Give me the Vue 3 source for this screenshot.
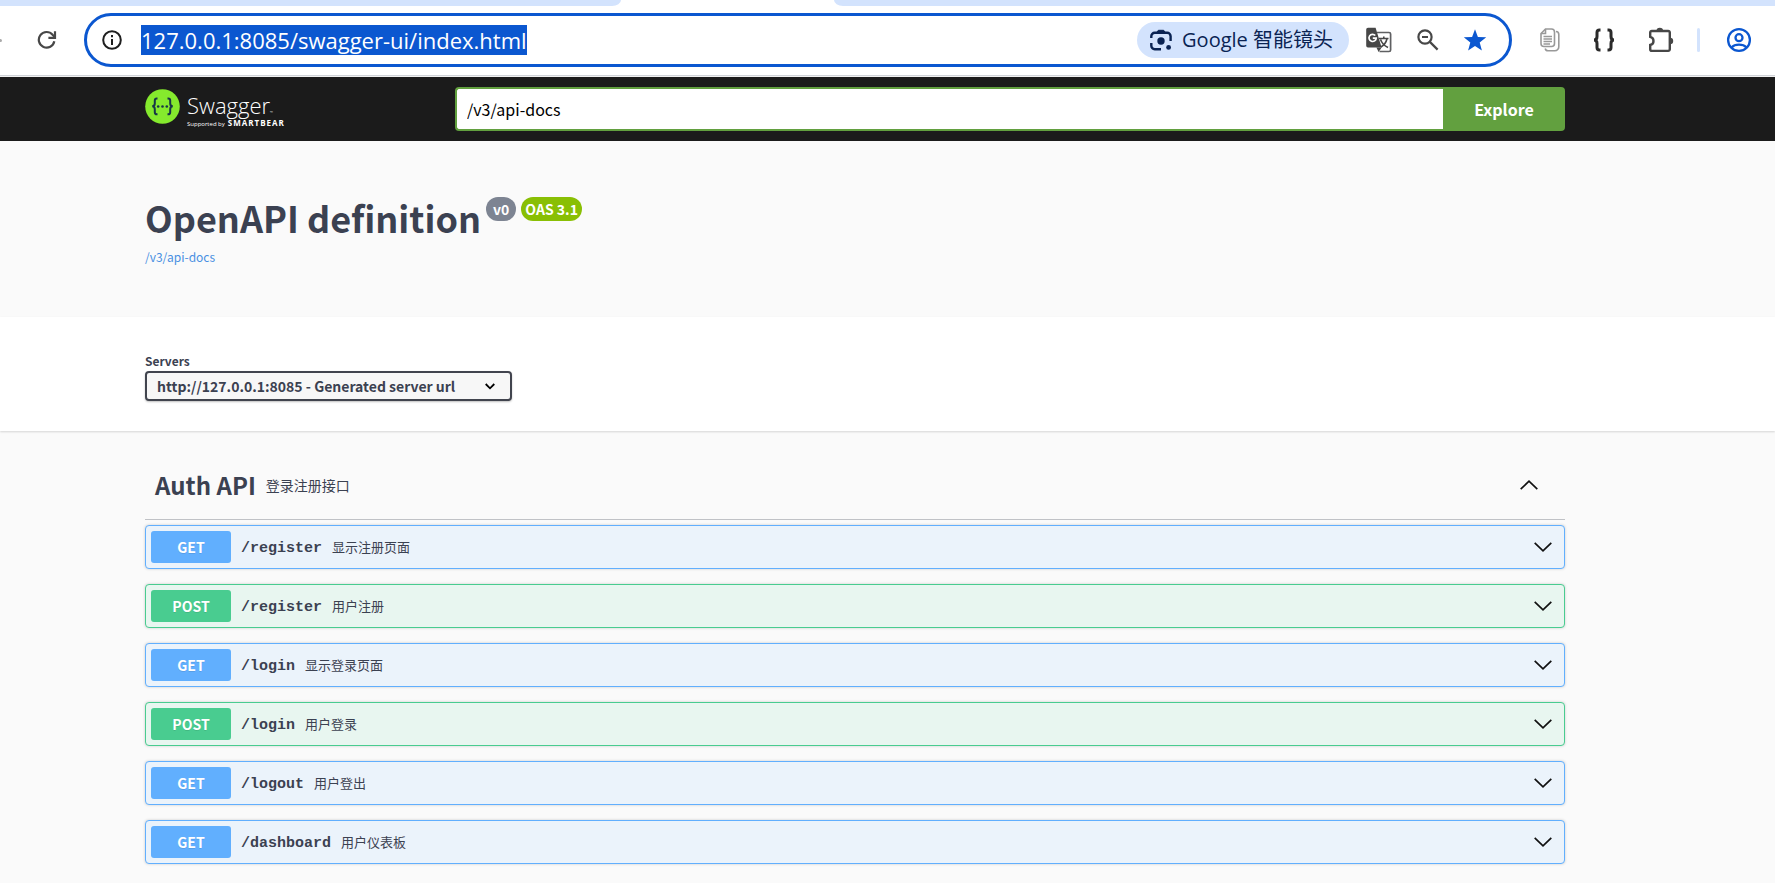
<script setup>
import { ref } from 'vue'

const address = ref('127.0.0.1:8085/swagger-ui/index.html')
const docsUrl = ref('/v3/api-docs')
const server = ref('http://127.0.0.1:8085')

const operations = [
  { method: 'GET', path: '/register', summary: '显示注册页面' },
  { method: 'POST', path: '/register', summary: '用户注册' },
  { method: 'GET', path: '/login', summary: '显示登录页面' },
  { method: 'POST', path: '/login', summary: '用户登录' },
  { method: 'GET', path: '/logout', summary: '用户登出' },
  { method: 'GET', path: '/dashboard', summary: '用户仪表板' },
]
</script>

<template>
  <div class="browser">
    <div class="tabstrip">
      <div class="strip-left"></div>
      <div class="strip-right"></div>
    </div>
    <div class="toolbar">
      <span class="nav-edge"></span>
      <button class="icon-btn reload" aria-label="Reload">
        <svg width="20" height="20" viewBox="0 0 20 20" fill="none" stroke="#474747" stroke-width="2.2">
          <path d="M17.3 11.2A7.8 7.8 0 1 1 15.6 4.8L17.6 7" />
          <path d="M18 1.2V7.8H11.4" />
        </svg>
      </button>
      <div class="omnibox">
        <button class="icon-btn info" aria-label="Site information">
          <svg width="20" height="20" viewBox="0 0 20 20" fill="none" stroke="#1f1f1f" stroke-width="2">
            <circle cx="10" cy="10" r="8.8" />
            <path d="M10 9V15M10 5V7.2" />
          </svg>
        </button>
        <div class="address-wrap">
          <input v-model="address" class="address" type="text" aria-label="Address" />
        </div>
        <button class="lens">
          <svg width="22" height="22" viewBox="0 0 22 22" fill="none" stroke="#0a2353" stroke-width="2.4">
            <path d="M1.3 9V7.2A3.4 3.4 0 0 1 4.7 3.8H17.2A3.4 3.4 0 0 1 20.6 7.2V12" />
            <path d="M1.3 14V16.8A3.4 3.4 0 0 0 4.7 20.2H11" />
            <path d="M7 3L8.3 1.3H13.7L15 3Z" fill="#0a2353" stroke-width="1" />
            <circle cx="11" cy="12" r="3.7" fill="#0a2353" stroke="none" />
            <circle cx="18.6" cy="18.4" r="2.4" fill="#0a2353" stroke="none" />
          </svg>
          <span>Google 智能镜头</span>
        </button>
        <button class="icon-btn translate" aria-label="Translate">
          <svg width="26" height="26" viewBox="0 0 26 26">
            <path d="M11 5.5H23A1.6 1.6 0 0 1 24.6 7.1V22.900A1.6 1.6 0 0 1 23 24.5H13.5" fill="none" stroke="#5f6062" stroke-width="1.7" />
            <path d="M2 .8H9.6L15.6 20.5H2A1.8 1.8 0 0 1 .2 18.7V2.6A1.8 1.8 0 0 1 2 .8Z" fill="#474747" />
            <path d="M10.4 20.5H15.6L12.6 25Z" fill="#474747" />
            <path d="M9.3 8.500A3.6 3.6 0 1 0 10.2 11.1H6.8" fill="none" stroke="#fff" stroke-width="1.7" />
            <path d="M13 11.5H22.5M17.8 9.5V11.5M21 11.8C20 16 17.6 18.5 15 20M14.5 12.5C16 16.5 18.5 18.8 22 20.5" fill="none" stroke="#474747" stroke-width="1.6" />
          </svg>
        </button>
        <button class="icon-btn zoom" aria-label="Zoom">
          <svg width="22" height="22" viewBox="0 0 22 22" fill="none" stroke="#474747" stroke-width="2.2">
            <circle cx="8" cy="8" r="6.6" />
            <path d="M12.6 12.6L20.6 20.6M5 8H11" />
          </svg>
        </button>
        <button class="icon-btn star" aria-label="Bookmark this page">
          <svg width="24" height="24" viewBox="0 0 24 24">
            <path d="M12 1.3L14.9 8.9L23.2 9.3L16.7 14.4L18.9 22.6L12 17.9L5.1 22.6L7.3 14.4L.8 9.3L9.1 8.9Z" fill="#0b57d0" />
          </svg>
        </button>
      </div>
      <button class="icon-btn" aria-label="Copy">
        <svg width="20" height="24" viewBox="0 0 20 24" fill="none" stroke="#999" stroke-width="1.6">
          <path d="M5.5 1H11.500A3 3 0 0 1 14.5 4V15.500A3 3 0 0 1 11.5 18.5H4A3 3 0 0 1 1 15.5V5.5Z" />
          <path d="M5.5 1V5.5H1" />
          <path d="M3.5 8.5H12M3.5 11H12M3.5 13.5H12M3.5 16H10" stroke-width="1.3" />
          <path d="M16 3.500A3 3 0 0 1 18.8 6.5V18.500A4 4 0 0 1 14.8 22.8H8A3 3 0 0 1 5.2 20.5" />
        </svg>
      </button>
      <button class="icon-btn" aria-label="JSON formatter">
        <svg width="22" height="24" viewBox="0 0 22 24" fill="none" stroke="#2b2b2b" stroke-width="3">
          <path d="M7.5 2H6.5Q4 2 4 4.5V8.5Q4 12 1 12Q4 12 4 15.5V19.5Q4 22 6.5 22H7.5" />
          <path d="M14.5 2H15.5Q18 2 18 4.5V8.5Q18 12 21 12Q18 12 18 15.5V19.5Q18 22 15.5 22H14.5" />
        </svg>
      </button>
      <button class="icon-btn" aria-label="Extensions">
        <svg width="26" height="26" viewBox="0 0 26 26">
          <path d="M3.8 4H20.200A1.6 1.6 0 0 1 21.8 5.6V22.300A1.6 1.6 0 0 1 20.2 23.9H3.800A1.6 1.6 0 0 1 2.2 22.3V18A4.2 4.2 0 0 0 2.2 9.8V5.600A1.6 1.6 0 0 1 3.8 4Z" fill="none" stroke="#474747" stroke-width="2.4" />
          <path d="M8.5 4A3.3 3.3 0 0 1 15.1 4ZM22 10.700A3.2 3.2 0 0 1 22 17.1Z" fill="#474747" />
        </svg>
      </button>
      <span class="divider"></span>
      <button class="icon-btn profile" aria-label="Profile">
        <svg width="26" height="26" viewBox="0 0 26 26" fill="none" stroke="#0b57d0" stroke-width="2.3">
          <circle cx="13" cy="13" r="10.9" />
          <circle cx="13" cy="10.7" r="3.5" />
          <path d="M5.5 20.5C9 16.7 17 16.7 20.5 20.5" />
        </svg>
      </button>
    </div>
  </div>

  <main class="swagger">
    <header class="topbar">
      <div class="wrap topbar-row">
        <a class="logo" href="#">
          <svg width="35" height="35" viewBox="0 0 35 35">
            <circle cx="17.5" cy="17.5" r="17.3" fill="#85ea2d" />
            <g fill="none" stroke="#173647" stroke-width="2">
              <path d="M12.5 9.5H11.8Q9.8 9.5 9.8 11.5V14.5Q9.8 17.3 7.2 17.3Q9.8 17.3 9.8 20.2V23.2Q9.8 25.3 11.8 25.3H12.5" />
              <path d="M22.5 9.5H23.2Q25.2 9.5 25.2 11.5V14.5Q25.2 17.3 27.8 17.3Q25.2 17.3 25.2 20.2V23.2Q25.2 25.3 23.2 25.3H22.5" />
            </g>
            <g fill="#173647">
              <circle cx="13.2" cy="17.5" r="1.3" />
              <circle cx="17.5" cy="17.5" r="1.3" />
              <circle cx="21.8" cy="17.5" r="1.3" />
            </g>
          </svg>
          <span class="wordmark">
            <span class="brand">Swagger<small>™</small></span>
            <span class="byline"><span>Supported by</span><b>SMARTBEAR</b></span>
          </span>
        </a>
        <form class="explore" @submit.prevent>
          <input v-model="docsUrl" type="text" aria-label="API definition URL" />
          <button type="submit">Explore</button>
        </form>
      </div>
    </header>

    <section class="info-section">
      <div class="wrap">
        <div class="title-row">
          <h1>OpenAPI definition</h1>
          <span class="badge">v0</span>
          <span class="badge oas">OAS 3.1</span>
        </div>
        <a class="docs-link" href="#">/v3/api-docs</a>
      </div>
    </section>

    <section class="servers">
      <div class="wrap">
        <label for="server">Servers</label>
        <div class="select-box">
          <select id="server" v-model="server">
            <option value="http://127.0.0.1:8085">http://127.0.0.1:8085 - Generated server url</option>
          </select>
          <svg width="10" height="7" viewBox="0 0 10 7" fill="none" stroke="#000" stroke-width="1.8">
            <path d="M.7 1L5 5.3L9.3 1" />
          </svg>
        </div>
      </div>
    </section>

    <section class="operations">
      <div class="wrap">
        <div class="tag">
          <h2>Auth API</h2>
          <p>登录注册接口</p>
          <button class="icon-btn" aria-label="Collapse Auth API">
            <svg width="18" height="10" viewBox="0 0 18 10" fill="none" stroke="#111" stroke-width="1.7">
              <path d="M.7 9.2L9 1.2L17.3 9.2" />
            </svg>
          </button>
        </div>
        <div
          v-for="op in operations"
          :key="op.method + op.path"
          class="op"
          :class="op.method.toLowerCase()"
        >
          <button class="method">{{ op.method }}</button>
          <a class="path" href="#">{{ op.path }}</a>
          <span class="summary">{{ op.summary }}</span>
          <button class="icon-btn" :aria-label="'Expand ' + op.path">
            <svg width="18" height="10" viewBox="0 0 18 10" fill="none" stroke="#111" stroke-width="1.7">
              <path d="M.7 .8L9 8.8L17.3 .8" />
            </svg>
          </button>
        </div>
      </div>
    </section>
  </main>
</template>

<style>
body {
  background: #fafafa;
}
</style>

<style scoped>
* {
  box-sizing: border-box;
}

button,
input,
select {
  font: inherit;
  margin: 0;
}

svg {
  display: block;
  flex: none;
}

a {
  text-decoration: none;
}

.icon-btn {
  display: flex;
  padding: 0;
  border: 0;
  background: none;
}

.browser {
  background: #fff;
  border-bottom: 1px solid #f1f1f1;
  font-family: "Open Sans", "Noto Sans CJK SC", sans-serif;
}

.tabstrip {
  display: flex;
  justify-content: space-between;
  height: 6px;
}

.strip-left {
  width: 35%;
  background: #d3e3fd;
  border-bottom-right-radius: 12px 8px;
}

.strip-right {
  width: 53%;
  background: #d3e3fd;
  border-bottom-left-radius: 12px 8px;
}

.toolbar {
  display: flex;
  align-items: center;
  height: 70px;
  padding: 0 23px 1px 0;
  border-bottom: 1px solid #d0d3d8;
}

.nav-edge {
  width: 2px;
  height: 3px;
  background: #aaa;
  border-radius: 0 2px 2px 0;
}

.reload {
  margin: 0 27px 0 35px;
}

.omnibox {
  display: flex;
  flex: 1;
  align-items: center;
  height: 54px;
  margin-right: 28px;
  padding: 0 22px 0 15px;
  border: 3px solid #0b57d0;
  border-radius: 27px;
}

.address-wrap {
  flex: 1;
  min-width: 0;
  margin-left: 19px;
}

.address {
  display: block;
  field-sizing: content;
  max-width: 100%;
  height: 30px;
  padding: 0;
  border: 0;
  outline: 0;
  background: #0b57d0;
  color: #fff;
  font-size: 22px;
  line-height: 30px;
}

.lens {
  display: flex;
  align-items: center;
  gap: 10px;
  height: 36px;
  padding: 0 16px 0 13px;
  border: 0;
  border-radius: 18px;
  background: #d3e3fd;
  color: #0a2353;
  font-size: 20px;
  line-height: 28px;
  white-space: nowrap;
}

.translate {
  margin-left: 17px;
}

.zoom {
  margin-left: 25px;
}

.star {
  margin-left: 24px;
}

.toolbar > .icon-btn + .icon-btn {
  margin-left: 33px;
}

.divider {
  width: 3px;
  height: 24px;
  margin: 0 26px 0 23px;
  border-radius: 2px;
  background: #d3e3fd;
}

.swagger {
  color: #3b4151;
  font-family: "Noto Sans CJK SC", sans-serif;
}

.topbar,
.info-section,
.servers,
.operations {
  padding-right: 65px;
}

.wrap {
  max-width: 1460px;
  margin: 0 auto;
  padding: 0 20px;
}

.topbar {
  background: #1b1b1b;
}

.topbar-row {
  display: flex;
  align-items: center;
  height: 64px;
}

.logo {
  display: flex;
  width: 310px;
  gap: 7px;
  color: #fff;
}

.wordmark {
  display: flex;
  flex-direction: column;
  padding-top: 4px;
  font-family: "Open Sans", sans-serif;
}

.brand {
  display: flex;
  align-items: baseline;
  height: 25px;
  font-size: 22px;
  font-weight: 300;
  line-height: 24px;
}

.brand small {
  font-size: 4px;
  line-height: 4px;
}

.byline {
  display: flex;
  align-items: baseline;
  gap: 3px;
  height: 11px;
  font-size: 6px;
  line-height: 10px;
  white-space: nowrap;
}

.byline b {
  font-size: 8px;
  letter-spacing: 1px;
}

.explore {
  display: flex;
  flex: 1;
  height: 44px;
}

.explore input {
  flex: 1;
  min-width: 0;
  padding: 0 10px;
  border: 2px solid #62a03f;
  border-right: 0;
  border-radius: 4px 0 0 4px;
  outline: 0;
  background: #fff;
  color: #000;
  font-size: 16px;
}

.explore button {
  width: 122px;
  padding: 0;
  border: 0;
  border-radius: 0 4px 4px 0;
  background: #62a03f;
  color: #fff;
  font-size: 16px;
  font-weight: 700;
}

.info-section {
  padding-top: 50px;
  padding-bottom: 50px;
  background: #fafafa;
}

.title-row {
  display: flex;
  align-items: flex-start;
  gap: 5px;
  height: 56px;
}

h1 {
  margin: 0;
  font-size: 36px;
  font-weight: 700;
  line-height: 52px;
}

.badge {
  margin-top: 6px;
  padding: 0 7px;
  border-radius: 12px;
  background: #7d8492;
  color: #fff;
  font-size: 14px;
  font-weight: 700;
  line-height: 24px;
}

.badge.oas {
  padding: 0 4px;
  background: #89bf04;
}

.docs-link {
  display: block;
  color: #4990e2;
  font-size: 12px;
  line-height: 20px;
}

.servers {
  padding-top: 36px;
  padding-bottom: 30px;
  background: #fff;
  box-shadow: 0 1px 2px rgba(0, 0, 0, 0.15);
}

.servers label {
  display: block;
  height: 18px;
  font-size: 12px;
  font-weight: 700;
  line-height: 16px;
}

.select-box {
  display: inline-block;
  position: relative;
  height: 30px;
}

.select-box select {
  display: block;
  height: 30px;
  padding: 0 54px 0 10px;
  appearance: none;
  border: 2px solid #41444e;
  border-radius: 4px;
  background: #f7f7f7;
  box-shadow: 0 1px 2px rgba(0, 0, 0, 0.25);
  color: #3b4151;
  font-size: 14px;
  font-weight: 700;
}

.select-box svg {
  position: absolute;
  top: 12px;
  right: 17px;
  pointer-events: none;
}

.operations {
  padding-top: 20px;
}

.tag {
  display: flex;
  align-items: center;
  height: 69px;
  margin-bottom: 5px;
  padding: 0 27px 0 10px;
  border-bottom: 1px solid rgba(59, 65, 81, 0.3);
}

.tag h2 {
  margin: 0;
  font-size: 24px;
  font-weight: 700;
  line-height: 36px;
}

.tag p {
  margin: 0;
  padding-left: 10px;
  font-size: 14px;
  line-height: 20px;
}

.tag .icon-btn,
.op .icon-btn {
  margin-left: auto;
}

.op {
  display: flex;
  align-items: center;
  height: 44px;
  margin-bottom: 15px;
  padding: 0 12px 0 5px;
  border: 1px solid #61affe;
  border-radius: 4px;
  background: #ebf3fb;
  box-shadow: 0 0 3px rgba(0, 0, 0, 0.19);
}

.op.post {
  border-color: #49cc90;
  background: #e8f6f0;
}

.method {
  width: 80px;
  height: 32px;
  padding: 0;
  border: 0;
  border-radius: 3px;
  background: #61affe;
  color: #fff;
  font-size: 14px;
  font-weight: 700;
  text-shadow: 0 1px 0 rgba(0, 0, 0, 0.1);
}

.post .method {
  background: #49cc90;
}

.path {
  padding: 2px 10px 0;
  color: #3b4151;
  font-family: "Liberation Mono", monospace;
  font-size: 15px;
  font-weight: 700;
}

.summary {
  font-size: 13px;
  line-height: 20px;
}
</style>
